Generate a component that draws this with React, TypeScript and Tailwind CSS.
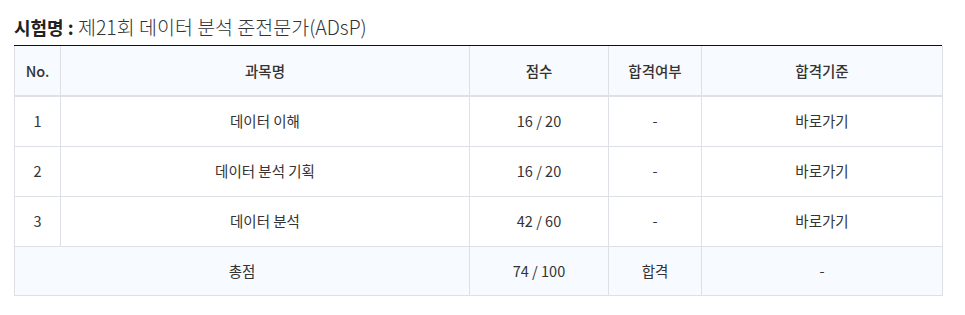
const rows = [
  { no: 1, name: '데이터 이해', score: '16 / 20', pass: '-', link: '바로가기' },
  { no: 2, name: '데이터 분석 기획', score: '16 / 20', pass: '-', link: '바로가기' },
  { no: 3, name: '데이터 분석', score: '42 / 60', pass: '-', link: '바로가기' },
];

export default function App() {
  return (
    <div
      className="bg-white px-[14px] pt-[14px] text-[#333]"
      style={{ fontFamily: '"Noto Sans CJK KR", "Noto Sans", sans-serif' }}
    >
      <h2 className="w-[928px] text-[19.5px] leading-[26px] pb-[5px] border-b border-[#111]">
        <span className="font-bold text-[#222] text-[18px]">시험명 :</span>{' '}
        <span className="font-light">제21회 데이터 분석 준전문가(ADsP)</span>
      </h2>
      <table className="w-[928px] border-collapse text-[14.5px] text-center table-fixed">
        <colgroup>
          <col className="w-[46px]" />
          <col className="w-[409px]" />
          <col className="w-[139px]" />
          <col className="w-[93px]" />
          <col className="w-[241px]" />
        </colgroup>
        <thead>
          <tr className="bg-[#f7fafe] h-[50px] border-b-2 border-[#dde1e6]">
            <th className="font-medium border-x border-[#dde1e6]">No.</th>
            <th className="font-medium border-x border-[#dde1e6]">과목명</th>
            <th className="font-medium border-x border-[#dde1e6]">점수</th>
            <th className="font-medium border-x border-[#dde1e6]">합격여부</th>
            <th className="font-medium border-x border-[#dde1e6]">합격기준</th>
          </tr>
        </thead>
        <tbody>
          {rows.map((r) => (
            <tr key={r.no} className="h-[50px]">
              <td className="border border-[#dde1e6]">{r.no}</td>
              <td className="border border-[#dde1e6]">{r.name}</td>
              <td className="border border-[#dde1e6]">{r.score}</td>
              <td className="border border-[#dde1e6]">{r.pass}</td>
              <td className="border border-[#dde1e6]">{r.link}</td>
            </tr>
          ))}
          <tr className="h-[49px] bg-[#f7fafe]">
            <td colSpan={2} className="border border-[#dde1e6]">총점</td>
            <td className="border border-[#dde1e6]">74 / 100</td>
            <td className="border border-[#dde1e6]">합격</td>
            <td className="border border-[#dde1e6]">-</td>
          </tr>
        </tbody>
      </table>
    </div>
  );
}
